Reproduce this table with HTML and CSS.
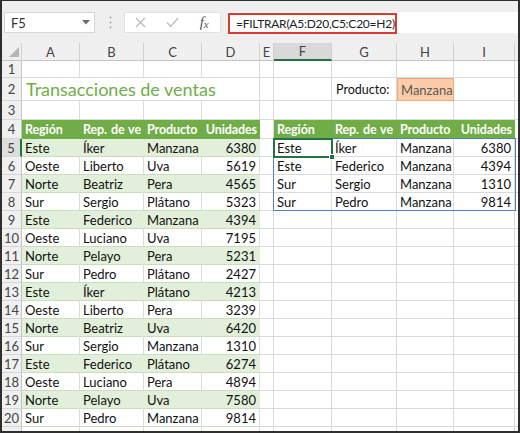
FILE: index.html
```html
<!DOCTYPE html>
<html lang="es">
<head>
<meta charset="utf-8">
<title>FILTRAR</title>
<link rel="stylesheet" href="styles.css">
</head>
<body>
<div class="frame">
  <div class="fbar">
    <div class="namebox"><span>F5</span><svg width="8" height="5" viewBox="0 0 8 5"><path d="M0 0h8L4 4.5z" fill="#6a6a6a"/></svg></div>
    <div class="grip"><svg width="3" height="13" viewBox="0 0 3 13"><circle cx="1.5" cy="1.5" r="1" fill="#a8a8a8"/><circle cx="1.5" cy="6.5" r="1" fill="#a8a8a8"/><circle cx="1.5" cy="11.5" r="1" fill="#a8a8a8"/></svg></div>
    <div class="btns">
      <span class="btn"><svg width="11" height="11" viewBox="0 0 11 11"><path d="M1 1L10 10M10 1L1 10" stroke="#bdbdbd" stroke-width="1.4" fill="none"/></svg></span>
      <span class="btn"><svg width="13" height="11" viewBox="0 0 13 11"><path d="M1 5.5L4.8 9.5L12 1" stroke="#bdbdbd" stroke-width="1.4" fill="none"/></svg></span>
      <span class="btn fx">f<span class="fxx">x</span></span>
    </div>
    <div class="formula"><span class="fbox">=FILTRAR(A5:D20,C5:C20=H2)</span></div>
  </div>
  <div class="sheet">
    <!-- column headers -->
    <div class="c ch corner"><svg width="10" height="10" viewBox="0 0 10 10"><path d="M10 0V10H0z" fill="#b7b7b7"/></svg></div>
    <div class="c ch">A</div><div class="c ch">B</div><div class="c ch">C</div><div class="c ch">D</div><div class="c ch">E</div><div class="c ch sel">F</div><div class="c ch">G</div><div class="c ch">H</div><div class="c ch">I</div><div class="c ch"></div>
    <!-- row 1 -->
    <div class="c rh">1</div><div class="c"></div><div class="c"></div><div class="c"></div><div class="c"></div><div class="c"></div><div class="c"></div><div class="c"></div><div class="c"></div><div class="c"></div><div class="c"></div>
    <!-- row 2 -->
    <div class="c rh">2</div><div class="c title">Transacciones de ventas</div><div class="c"></div><div class="c"></div><div class="c lbl">Producto:</div><div class="c inp">Manzana</div><div class="c"></div><div class="c"></div>
    <!-- row 3 -->
    <div class="c rh">3</div><div class="c"></div><div class="c"></div><div class="c"></div><div class="c"></div><div class="c"></div><div class="c"></div><div class="c"></div><div class="c"></div><div class="c"></div><div class="c"></div>
    <!-- row 4 -->
    <div class="c rh">4</div><div class="c th">Región</div><div class="c th">Rep. de ve</div><div class="c th">Producto</div><div class="c th n">Unidades</div><div class="c"></div><div class="c th">Región</div><div class="c th">Rep. de ve</div><div class="c th">Producto</div><div class="c th n">Unidades</div><div class="c"></div>
    <!-- row 5 -->
    <div class="c rh rsel">5</div><div class="c g">Este</div><div class="c g">Íker</div><div class="c g">Manzana</div><div class="c g n">6380</div><div class="c"></div><div class="c">Este</div><div class="c">Íker</div><div class="c">Manzana</div><div class="c n">6380</div><div class="c"></div>
    <!-- row 6 -->
    <div class="c rh">6</div><div class="c w">Oeste</div><div class="c w">Liberto</div><div class="c w">Uva</div><div class="c w n">5619</div><div class="c"></div><div class="c">Este</div><div class="c">Federico</div><div class="c">Manzana</div><div class="c n">4394</div><div class="c"></div>
    <!-- row 7 -->
    <div class="c rh">7</div><div class="c g">Norte</div><div class="c g">Beatriz</div><div class="c g">Pera</div><div class="c g n">4565</div><div class="c"></div><div class="c">Sur</div><div class="c">Sergio</div><div class="c">Manzana</div><div class="c n">1310</div><div class="c"></div>
    <!-- row 8 -->
    <div class="c rh">8</div><div class="c w">Sur</div><div class="c w">Sergio</div><div class="c w">Plátano</div><div class="c w n">5323</div><div class="c"></div><div class="c">Sur</div><div class="c">Pedro</div><div class="c">Manzana</div><div class="c n">9814</div><div class="c"></div>
    <!-- row 9 -->
    <div class="c rh">9</div><div class="c g">Este</div><div class="c g">Federico</div><div class="c g">Manzana</div><div class="c g n">4394</div><div class="c"></div><div class="c"></div><div class="c"></div><div class="c"></div><div class="c"></div><div class="c"></div>
    <!-- row 10 -->
    <div class="c rh">10</div><div class="c w">Oeste</div><div class="c w">Luciano</div><div class="c w">Uva</div><div class="c w n">7195</div><div class="c"></div><div class="c"></div><div class="c"></div><div class="c"></div><div class="c"></div><div class="c"></div>
    <!-- row 11 -->
    <div class="c rh">11</div><div class="c g">Norte</div><div class="c g">Pelayo</div><div class="c g">Pera</div><div class="c g n">5231</div><div class="c"></div><div class="c"></div><div class="c"></div><div class="c"></div><div class="c"></div><div class="c"></div>
    <!-- row 12 -->
    <div class="c rh">12</div><div class="c w">Sur</div><div class="c w">Pedro</div><div class="c w">Plátano</div><div class="c w n">2427</div><div class="c"></div><div class="c"></div><div class="c"></div><div class="c"></div><div class="c"></div><div class="c"></div>
    <!-- row 13 -->
    <div class="c rh">13</div><div class="c g">Este</div><div class="c g">Íker</div><div class="c g">Plátano</div><div class="c g n">4213</div><div class="c"></div><div class="c"></div><div class="c"></div><div class="c"></div><div class="c"></div><div class="c"></div>
    <!-- row 14 -->
    <div class="c rh">14</div><div class="c w">Oeste</div><div class="c w">Liberto</div><div class="c w">Pera</div><div class="c w n">3239</div><div class="c"></div><div class="c"></div><div class="c"></div><div class="c"></div><div class="c"></div><div class="c"></div>
    <!-- row 15 -->
    <div class="c rh">15</div><div class="c g">Norte</div><div class="c g">Beatriz</div><div class="c g">Uva</div><div class="c g n">6420</div><div class="c"></div><div class="c"></div><div class="c"></div><div class="c"></div><div class="c"></div><div class="c"></div>
    <!-- row 16 -->
    <div class="c rh">16</div><div class="c w">Sur</div><div class="c w">Sergio</div><div class="c w">Manzana</div><div class="c w n">1310</div><div class="c"></div><div class="c"></div><div class="c"></div><div class="c"></div><div class="c"></div><div class="c"></div>
    <!-- row 17 -->
    <div class="c rh">17</div><div class="c g">Este</div><div class="c g">Federico</div><div class="c g">Plátano</div><div class="c g n">6274</div><div class="c"></div><div class="c"></div><div class="c"></div><div class="c"></div><div class="c"></div><div class="c"></div>
    <!-- row 18 -->
    <div class="c rh">18</div><div class="c w">Oeste</div><div class="c w">Luciano</div><div class="c w">Pera</div><div class="c w n">4894</div><div class="c"></div><div class="c"></div><div class="c"></div><div class="c"></div><div class="c"></div><div class="c"></div>
    <!-- row 19 -->
    <div class="c rh">19</div><div class="c g">Norte</div><div class="c g">Pelayo</div><div class="c g">Uva</div><div class="c g n">7580</div><div class="c"></div><div class="c"></div><div class="c"></div><div class="c"></div><div class="c"></div><div class="c"></div>
    <!-- row 20 -->
    <div class="c rh">20</div><div class="c w">Sur</div><div class="c w">Pedro</div><div class="c w">Manzana</div><div class="c w n">9814</div><div class="c"></div><div class="c"></div><div class="c"></div><div class="c"></div><div class="c"></div><div class="c"></div>
    <!-- row 21 (only its top edge is visible) -->
    <div class="c rh"></div><div class="c"></div><div class="c"></div><div class="c"></div><div class="c"></div><div class="c"></div><div class="c"></div><div class="c"></div><div class="c"></div><div class="c"></div><div class="c"></div>

    <div class="spill"></div>
    <div class="active"><span class="handle"></span></div>
  </div>
</div>
</body>
</html>
```

FILE: styles.css
```css
* { box-sizing: border-box; }
html, body { margin: 0; padding: 0; background: #fff; }
body { font-family: Lato, "Open Sans", sans-serif; }

.frame {
  width: 520px;
  height: 433px;
  border: 2px solid #2f2f2f;
  border-top-width: 1px;
  overflow: hidden;
  background: #fff;
}

/* formula bar */
.fbar {
  height: 42px;
  background: #efefef;
  display: flex;
  align-items: flex-start;
  padding: 11px 0 0 2px;
}
.namebox {
  width: 91px;
  height: 21px;
  background: #fff;
  border: 1px solid #d6d6d6;
  display: flex;
  align-items: center;
  justify-content: space-between;
  padding: 0 4px 0 6px;
  font-size: 13px;
  color: #333;
}
.grip {
  margin-left: 11px;
  width: 8px;
  height: 21px;
  display: flex;
  align-items: center;
  justify-content: center;
}
.btns {
  margin-left: 10px;
  width: 97px;
  height: 21px;
  background: #fff;
  border: 1px solid #e2e2e2;
  display: flex;
}
.btn {
  width: 32px;
  display: flex;
  align-items: center;
  justify-content: center;
}
.fx {
  font-family: "Liberation Serif", serif;
  font-style: italic;
  font-size: 15px;
  color: #555;
  align-items: center;
}
.fxx { font-size: 11px; margin-top: 3px; }
.formula {
  margin-left: 7px;
  flex: 1;
  height: 21px;
  background: #fff;
}
.fbox {
  display: inline-block;
  width: 169px;
  height: 21px;
  border: 2px solid #d93a32;
  padding: 0 0 0 6px;
  line-height: 17px;
  font-size: 12px;
  letter-spacing: -0.25px;
  color: #222;
  white-space: nowrap;
}

/* sheet grid */
.sheet {
  position: relative;
  display: grid;
  grid-template-columns: 20px 58px 64px 58px 58px 14px 58px 65px 57px 61px 3px;
  grid-template-rows: 18px 17px 23px 19px 19px repeat(16, 18px) 18px;
  font-size: 13px;
  color: #111;
}
.c {
  border-right: 1px solid #dadada;
  border-bottom: 1px solid #dadada;
  padding: 0 3px 0 3px;
  display: flex;
  align-items: center;
  white-space: nowrap;
  overflow: hidden;
}
.n { justify-content: flex-end; }

.ch {
  background: #f0f0f0;
  color: #444;
  justify-content: center;
  border-right-color: #d0d0d0;
  border-bottom-color: #c4c4c4;
  font-size: 13px;
}
.ch.sel {
  background: #d9d9d9;
  border-bottom: 2px solid #217346;
}
.corner {
  justify-content: flex-end;
  align-items: flex-end;
  padding: 0 2px 3px 0;
}
.rh {
  background: #f0f0f0;
  color: #444;
  justify-content: center;
  padding: 0;
  border-right-color: #c4c4c4;
  border-bottom-color: #d6d6d6;
}
.rh.rsel {
  background: #dedede;
  border-right: 2px solid #217346;
}

.title {
  grid-column: span 4;
  color: #70ad47;
  font-size: 18px;
  padding-left: 4px;
}
.lbl { padding-left: 4px; font-size: 12.5px; }
.inp {
  background: #fbcca8;
  border: 1px solid #eea878;
  color: #5a5a5a;
  padding-left: 3px;
}

.th {
  background: #70ad47;
  color: #fff;
  font-weight: bold;
  font-size: 12.5px;
  letter-spacing: -0.1px;
  word-spacing: 1px;
  border-right-color: #70ad47;
  border-bottom-color: #70ad47;
}
.th.n { justify-content: flex-end; padding-right: 2px; }
.g {
  background: #e2efda;
  border-right-color: #e2efda;
  border-bottom-color: #c9dfbb;
}
.w {
  border-bottom-color: #c9dfbb;
}

/* overlays: spill range and active cell */
.spill {
  position: absolute;
  left: 271px;
  top: 95px;
  width: 243px;
  height: 73px;
  border: 1px solid #4f81bd;
  pointer-events: none;
}
.active {
  position: absolute;
  left: 271px;
  top: 95px;
  width: 60px;
  height: 20px;
  border: 2px solid #217346;
  pointer-events: none;
}
.handle {
  position: absolute;
  right: -4px;
  bottom: -4px;
  width: 6px;
  height: 6px;
  background: #217346;
  border: 1px solid #fff;
}
```
